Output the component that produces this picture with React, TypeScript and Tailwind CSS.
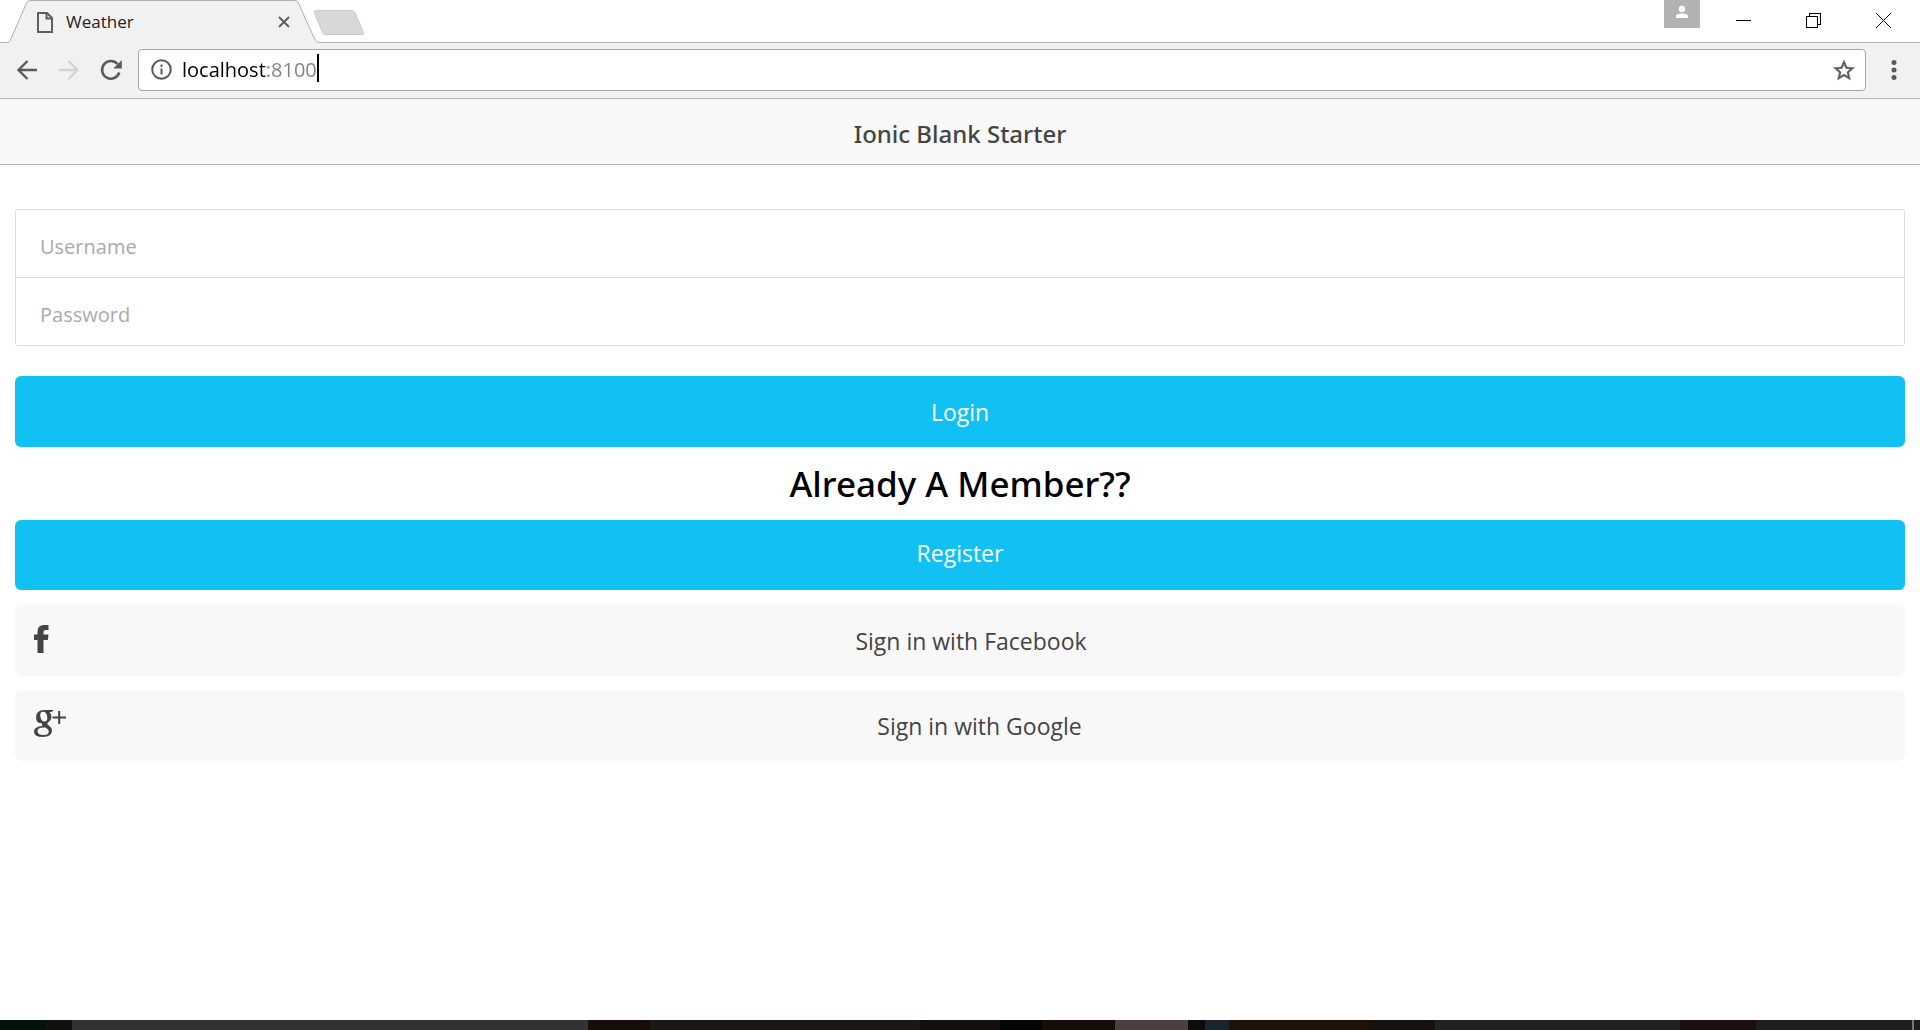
import React from 'react';

const iconButton = 'flex shrink-0 items-center justify-center';

function TitleBar() {
  return (
    <div className="flex h-[43px] items-start border-b border-[#b5b5b5] bg-white">
      <div className="relative -mb-px h-[43px] w-[312px] shrink-0 ml-2">
        <svg className="absolute inset-0 h-full w-full" viewBox="0 0 312 43" aria-hidden="true">
          <path d="M0 43 L0 42.5 Q1.500 42 2 40.500 L18.500 3 Q19.500 .5 22 .5 H287 Q289.500 .5 290.500 3 L307 40 Q308.500 42.500 311 42.500 V43Z" fill="#f1f1f1" />
          <path d="M0 42.500 Q1.500 42 2.500 40 L18.500 3 Q19.500 .5 22 .5 H287 Q289.500 .5 290.500 3 L307 40 Q308.500 42.500 311 42.500" fill="none" stroke="#b0b0b0" />
        </svg>
        <div className="relative flex h-full items-center pl-7 pr-[30px]">
          <svg className="h-[22px] w-[18px] shrink-0" viewBox="0 0 18 22" fill="none" stroke="#5f5f5f" strokeWidth="2" aria-hidden="true">
            <path d="M2 2H11L16 7V21H2Z" />
            <path d="M10.500 2V7.500H16" />
          </svg>
          <span className="ml-3 flex-1 text-[17px] text-[#222]">Weather</span>
          <button className={iconButton} aria-label="Close tab">
            <svg width="12" height="12" viewBox="0 0 12 12" stroke="#5a5a5a" strokeWidth="1.800"><path d="M1 1 11 11M11 1 1 11" /></svg>
          </button>
        </div>
      </div>
      <button className="-ml-2 mt-[9px]" aria-label="New tab">
        <svg width="54" height="28" viewBox="0 0 54 28"><path d="M4 1.500H40Q42 1.500 43 3.500L51.500 23.500Q52 25.500 50 25.500H14Q11.500 25.500 10.500 23.500L2.500 4Q2 1.500 4 1.500Z" fill="#d8d8d8" stroke="#cbcbcb" /></svg>
      </button>
      <div className="flex-1" />
      <button className="mr-9 flex h-7 w-9 justify-center bg-[#b2b2b2]" aria-label="Profile">
        <svg width="14" height="20" viewBox="0 0 14 20" fill="#fff"><circle cx="7" cy="9" r="3.200" /><path d="M1 18V16Q1 13.500 7 13.500T13 16V18Z" /></svg>
      </button>
      <div className="mr-[29px] flex h-[41px] items-center gap-[55px]">
        <button className={iconButton} aria-label="Minimize">
          <svg width="15" height="15" viewBox="0 0 15 15" shapeRendering="crispEdges"><path d="M0 7.500H15" stroke="#000" /></svg>
        </button>
        <button className={iconButton} aria-label="Restore">
          <svg width="15" height="15" viewBox="0 0 15 15" fill="none" stroke="#000" shapeRendering="crispEdges"><path d="M.5 3.500H11.500V14.500H.5ZM3.500 3V.5H14.500V11.500H12" /></svg>
        </button>
        <button className={iconButton} aria-label="Close">
          <svg width="15" height="15" viewBox="0 0 15 15" stroke="#000"><path d="M0 0 15 15M15 0 0 15" /></svg>
        </button>
      </div>
    </div>
  );
}

function Toolbar() {
  return (
    <div className="flex h-14 items-center border-b border-[#b5b5b5] bg-[#f1f1f1] pb-0.5 pl-4 pr-[22px]">
      <button className={iconButton} aria-label="Back">
        <svg width="22" height="22" viewBox="0 0 22 22" fill="none" stroke="#5a5a5a" strokeWidth="2.400"><path d="M21 11H3M11.500 2 2.500 11 11.500 20" /></svg>
      </button>
      <button className={`${iconButton} ml-5`} aria-label="Forward">
        <svg width="22" height="22" viewBox="0 0 22 22" fill="none" stroke="#d3d3d3" strokeWidth="2.400"><path d="M1 11H19M10.500 2 19.500 11 10.500 20" /></svg>
      </button>
      <button className={`${iconButton} ml-5`} aria-label="Reload">
        <svg width="22" height="22" viewBox="0 0 22 22" fill="none" stroke="#5a5a5a" strokeWidth="2.500"><path d="M19.300 13.500A8.800 8.800 0 1 1 17.500 5" /><path d="M21.800 1V9.500H13.300Z" fill="#5a5a5a" stroke="none" /></svg>
      </button>
      <div className="ml-4 flex h-[42px] flex-1 items-center rounded border border-[#a6a6a6] bg-white pl-3 pr-2.5">
        <svg className="shrink-0" width="21" height="21" viewBox="0 0 21 21" fill="none" stroke="#5a5a5a" strokeWidth="2" aria-hidden="true"><circle cx="10.500" cy="10.500" r="9.300" /><path d="M10.500 9.500V15.500M10.500 5.500V8" /></svg>
        <input
          aria-label="Address"
          defaultValue="localhost:8100"
          className="field-sizing-content ml-2.5 bg-linear-to-r from-black from-62% to-[#808080] to-62% bg-clip-text text-[20px] text-transparent outline-none"
        />
        <span className="mb-1 h-7 w-0.5 bg-black" />
        <div className="flex-1" />
        <button className={iconButton} aria-label="Bookmark this page">
          <svg width="22" height="22" viewBox="1.500 1.500 21 20" fill="#5a5a5a"><path d="M22 9.240l-7.190-.62L12 2 9.190 8.630 2 9.240l5.460 4.730L5.820 21 12 17.270 18.180 21l-1.630-7.030L22 9.240zM12 15.400l-3.760 2.270 1-4.280-3.320-2.880 4.380-.38L12 6.100l1.710 4.040 4.380.38-3.320 2.880 1 4.280L12 15.400z" stroke="#5a5a5a" strokeWidth=".4" /></svg>
        </button>
      </div>
      <button className={`${iconButton} ml-6`} aria-label="Menu">
        <svg width="8" height="22" viewBox="0 0 8 22" fill="#5a5a5a"><circle cx="4" cy="3.500" r="2.500" /><circle cx="4" cy="11" r="2.500" /><circle cx="4" cy="18.500" r="2.500" /></svg>
      </button>
    </div>
  );
}

function Field({ label, type }: { label: string; type: string }) {
  return (
    <div>
      <input
        type={type}
        aria-label={label}
        placeholder={label}
        className="block h-[67px] w-full px-6 pt-1.5 text-[20px] outline-none placeholder:text-[#aaa]"
      />
    </div>
  );
}

function FacebookIcon() {
  return (
    <svg className="mb-1" width="15" height="28" viewBox="0 0 15 28" fill="#444" aria-hidden="true"><path d="M3.500 28V15H0V9.500H3.500V7Q3.500 0 10 0H14.500V5H11.500Q9.500 5 9.500 7V9.500H14.500L13.800 15H9.500V28Z" /></svg>
  );
}

function GooglePlusIcon() {
  return (
    <svg className="mb-1" width="32" height="28" viewBox="0 0 32 28" fill="#444" aria-hidden="true">
      <path fillRule="evenodd" d="M10 0H20L17.500 2H15.500Q17.500 4 17.500 6.800Q17.500 10 14.500 12Q12.500 13.500 13.500 14.500L16 16.500Q18 18.200 18 20.500Q18 27 9 27Q0 27 0 21.500Q0 16.500 8.500 16Q7.500 15 8 13.300Q2 13.500 2 7.500Q2 0 10 0ZM9 1.800Q6 2 6.200 5.500Q6.800 11.500 10.500 11.500Q13.500 11.300 13.300 7.500Q12.800 1.600 9 1.800ZM9.500 17.500Q3.500 17.500 3.500 21Q3.500 25 9.500 25Q14.800 25 14.800 21.500Q14.800 20 13.500 19L11.300 17.500Z" />
      <path d="M24.200 1H26.200V6.500H32V8.500H26.200V14H24.200V8.500H18.500V6.500H24.200Z" />
    </svg>
  );
}

function Page() {
  return (
    <main className="flex-1 bg-white">
      <header className="flex h-[66px] items-center justify-center border-b border-[#b2b2b2] bg-[#f8f8f8] pt-1">
        <h1 className="font-['Noto_Sans','Open_Sans',sans-serif] text-[24px] font-medium text-[#444]">Ionic Blank Starter</h1>
      </header>
      <form className="px-[15px] pt-11">
        <div className="divide-y divide-[#ddd] rounded-[3px] border border-[#ddd]">
          <Field label="Username" type="text" />
          <Field label="Password" type="password" />
        </div>
        <button type="button" className="mt-[30px] block h-[71px] w-full rounded-md bg-[#11c1f3] pt-0.5 text-[23px] text-white">Login</button>
        <h2 className="flex h-[73px] items-center justify-center pt-0.5 font-['Noto_Sans','Open_Sans',sans-serif] text-[35px] font-medium text-black">Already A Member??</h2>
        <button type="button" className="block h-[70px] w-full rounded-md bg-[#11c1f3] pb-1 text-[23px] text-white">Register</button>
        <button type="button" className="mt-[15px] flex h-[71px] w-full items-center rounded-md bg-[#f8f8f8] pl-[19px] pr-3 text-[23px] text-[#444]">
          <FacebookIcon />
          <span className="flex-1 pt-0.5">Sign in with Facebook</span>
        </button>
        <button type="button" className="mt-[15px] flex h-[70px] w-full items-center rounded-md bg-[#f8f8f8] pl-[19px] pr-3 text-[23px] text-[#444]">
          <GooglePlusIcon />
          <span className="flex-1">Sign in with Google</span>
        </button>
      </form>
    </main>
  );
}

function Taskbar() {
  return (
    <footer className="flex h-2.5 bg-[#1b1815]">
      <div className="w-[46px] bg-[#031307]" />
      <div className="w-[26px] bg-[#0f120d]" />
      <div className="w-[516px] bg-[#333]" />
      <div className="w-[62px] bg-[#170d09]" />
      <div className="w-[270px] bg-[#1c1915]" />
      <div className="w-[80px] bg-[#14100d]" />
      <div className="w-[42px] bg-[#040505]" />
      <div className="w-[73px] bg-[#160c07]" />
      <div className="w-[73px] bg-[#4b403e]" />
      <div className="w-[17px] bg-[#0d0c0b]" />
      <div className="w-[24px] bg-[#1a242c]" />
      <div className="w-[138px] bg-[#1f1208]" />
      <div className="w-[68px] bg-[#17110e]" />
      <div className="w-[245px] bg-[#202121]" />
      <div className="w-[76px] bg-[#1a0f0c]" />
      <div className="flex-1 bg-[#1e1e1e]" />
      <div className="w-0.5 bg-[#777]" />
      <div className="w-1.5 bg-[#1e1e1e]" />
    </footer>
  );
}

export default function App() {
  return (
    <div className="flex min-h-screen flex-col font-['Open_Sans','Noto_Sans',sans-serif]">
      <TitleBar />
      <Toolbar />
      <Page />
      <Taskbar />
    </div>
  );
}
